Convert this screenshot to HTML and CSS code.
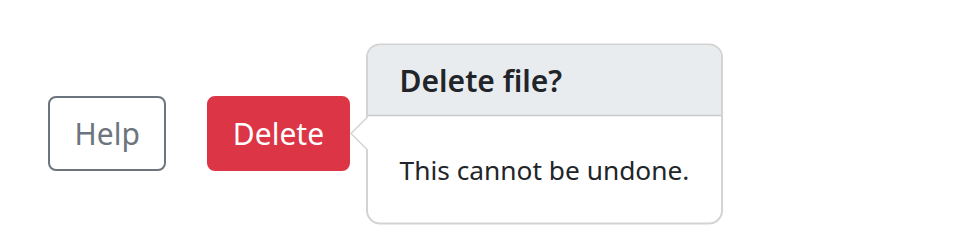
FILE: index.html
```html
<!DOCTYPE html>
<html lang="en">
<head>
<meta charset="utf-8">
<title>Popover</title>
<link rel="stylesheet" href="styles.css">
</head>
<body>
  <div class="stage">
    <button class="btn btn-outline" type="button">Help</button>
    <div class="anchor">
      <button class="btn btn-danger" type="button">Delete</button>
      <div class="popover" role="tooltip">
        <span class="popover-arrow"></span>
        <h3 class="popover-header">Delete file?</h3>
        <div class="popover-body">This cannot be undone.</div>
      </div>
    </div>
  </div>
</body>
</html>
```
FILE: styles.css
```css
html, body {
  margin: 0;
  padding: 0;
  background: #ffffff;
}

body {
  font-family: "Noto Sans", "Open Sans", "Liberation Sans", sans-serif;
  color: #212529;
}

.stage {
  box-sizing: border-box;
  min-height: 249px;
  display: flex;
  align-items: flex-start;
  gap: 41px;
  padding: 96px 0 0 48px;
}

.btn {
  font-family: inherit;
  font-size: 30px;
  line-height: 45px;
  padding: 13px 24.5px;
  border: 2px solid transparent;
  border-radius: 8px;
  background: transparent;
  cursor: pointer;
  margin: 0;
}

.btn-outline {
  color: #6c757d;
  border-color: #6c757d;
}

.btn-danger {
  padding: 13px 23.5px;
  color: #ffffff;
  background: #dc3545;
  border-color: #dc3545;
}

.anchor {
  position: relative;
  display: flex;
}

.popover {
  position: absolute;
  left: calc(100% + 16px);
  top: 50%;
  transform: translateY(-50%);
  background: #ffffff;
  border: 2px solid #d3d3d3;
  border-radius: 14px;
  white-space: nowrap;
}

.popover-arrow {
  position: absolute;
  left: -18px;
  top: 50%;
  margin-top: -16px;
  width: 16px;
  height: 32px;
}

.popover-arrow::before,
.popover-arrow::after {
  content: "";
  position: absolute;
  top: 0;
  border-style: solid;
  border-color: transparent;
  border-width: 16px 16px 16px 0;
}

.popover-arrow::before {
  left: 0;
  border-right-color: #d3d3d3;
}

.popover-arrow::after {
  left: 2px;
  border-right-color: #ffffff;
}

.popover-header {
  margin: 0;
  padding: 16px 32px;
  font-size: 30px;
  line-height: 37px;
  font-weight: 600;
  background: #e9ecef;
  border-bottom: 2px solid #c8cacd;
  border-radius: 12px 12px 0 0;
}

.popover-body {
  padding: 32px;
  font-size: 26.3px;
  line-height: 42px;
}
```
